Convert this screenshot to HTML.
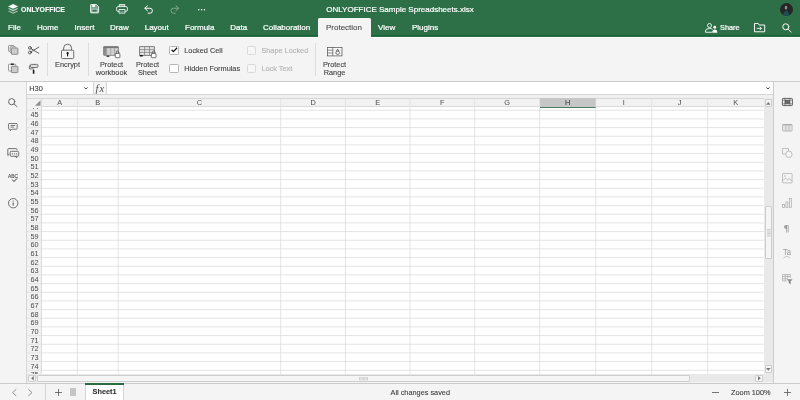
<!DOCTYPE html>
<html lang="en"><head><meta charset="utf-8"><title>ONLYOFFICE Sample Spreadsheets.xlsx</title>
<style>
*{box-sizing:border-box;margin:0;padding:0}
html,body{width:800px;height:400px;overflow:hidden;background:#f4f4f4;}
body{position:relative;font-family:"Liberation Sans",sans-serif;font-size:7.33px;color:#404040;line-height:1}
.abs{position:absolute}
#hdr{position:absolute;left:0;top:0;width:800px;height:36.5px;background:#2d7048}
.tab{position:absolute;top:23.2px;font-size:8px;color:#fff;white-space:nowrap;line-height:9px;-webkit-text-stroke:0.22px}
.t{position:absolute;white-space:nowrap;line-height:7.33px}
.c{text-align:center}
svg{position:absolute;overflow:visible}
#app{position:absolute;left:0;top:0;width:800px;height:400px;will-change:transform;-webkit-text-stroke:0.1px}
.sep{position:absolute;top:42.5px;height:33px;width:0.67px;background:#dcdcdc}
.cb{position:absolute;width:9.33px;height:9.33px;border:0.67px solid #b5b5b5;border-radius:1.3px;background:#fff}
.cb.dis{border-color:#dadada;background:#f6f6f6}
.rh{position:absolute;left:27px;width:15px;text-align:center;font-size:7.33px;line-height:8.67px;color:#4a4a4a;-webkit-text-stroke:0}
.ch{position:absolute;top:99px;height:8.5px;text-align:center;font-size:7.33px;line-height:8.8px;color:#4a4a4a;-webkit-text-stroke:0}
</style></head>
<body>
<div id="app">
<div id="hdr"></div>
<div class="abs" style="left:0;top:34.9px;width:318px;height:1.6px;background:#15653a"></div>
<div class="abs" style="left:370.6px;top:34.9px;width:429.4px;height:1.6px;background:#15653a"></div>
<div class="abs" style="left:0;top:36.9px;width:318px;height:1.1px;background:#fdfdfd"></div>
<div class="abs" style="left:370.6px;top:36.9px;width:429.4px;height:1.1px;background:#fdfdfd"></div>
<svg style="left:7.9px;top:4.2px" width="10.2" height="9.8" viewBox="0 0 20.4 19.6">
<path d="M10.2 0 L20.4 4.8 L10.2 9.6 L0 4.8 Z" fill="#fff"/>
<path d="M2.6 8.4 L0 9.7 L10.2 14.5 L20.4 9.7 L17.8 8.4 L10.2 12 Z" fill="#fff" opacity=".8"/>
<path d="M2.6 13.4 L0 14.7 L10.2 19.5 L20.4 14.7 L17.8 13.4 L10.2 17 Z" fill="#fff" opacity=".6"/>
</svg>
<div class="t" style="left:20.5px;top:5.7px;font-size:7.7px;line-height:7.7px;font-weight:bold;color:#fff;transform-origin:0 0;transform:scaleX(.9)">ONLYOFFICE</div>
<svg style="left:90px;top:4.2px" width="9.2" height="9.4" viewBox="0 0 9.2 9.4" fill="none" stroke="#fff" stroke-width=".85" stroke-linejoin="round">
<path d="M.6 1.1 Q.6 .5 1.2 .5 H6.4 L8.6 2.7 V8.3 Q8.6 8.9 8 8.9 H1.2 Q.6 8.9 .6 8.3 Z" fill="rgba(255,255,255,.38)"/>
<rect x="2.3" y=".9" width="2.6" height="2.1" fill="#fff" stroke="none"/>
<rect x="2" y="5.3" width="5.2" height="2.7" fill="#2d7048" stroke="#e9f1ec" stroke-width=".6"/>
</svg>
<svg style="left:115.6px;top:4.2px" width="12" height="9.6" viewBox="0 0 12 9.6" fill="none" stroke="#fff" stroke-width=".85" stroke-linejoin="round">
<path d="M3.3 2.6 V.6 H8.7 V2.6" fill="rgba(255,255,255,.38)"/>
<rect x=".6" y="2.6" width="10.8" height="4.8" rx="1.5"/>
<rect x="3" y="5.5" width="6" height="3.6" fill="#2d7048"/>
<path d="M4.3 7.3 H7.7" stroke-width=".7" stroke="rgba(255,255,255,.55)"/>
</svg>
<svg style="left:143.7px;top:4.5px" width="9.4" height="9" viewBox="0 0 19 18" fill="none" stroke="#fff" stroke-width="2" stroke-linecap="round" stroke-linejoin="round">
<path d="M7 1.5 L1.5 6.5 L7 11.5"/><path d="M2 6.5 H12 A5 5 0 0 1 12 16.5 H8.5"/>
</svg>
<svg style="left:169.7px;top:4.5px;opacity:.4" width="9.4" height="9" viewBox="0 0 19 18" fill="none" stroke="#fff" stroke-width="2" stroke-linecap="round" stroke-linejoin="round">
<path d="M12 1.5 L17.5 6.5 L12 11.5"/><path d="M17 6.5 H7 A5 5 0 0 0 7 16.5 H10.5"/>
</svg>
<svg style="left:198px;top:8.6px" width="7.2" height="1.6" viewBox="0 0 7.2 1.6"><circle cx=".8" cy=".8" r=".75" fill="#fff"/><circle cx="3.6" cy=".8" r=".75" fill="#fff"/><circle cx="6.4" cy=".8" r=".75" fill="#fff"/></svg>
<div class="t" style="left:200px;width:400px;text-align:center;top:4.7px;font-size:8px;line-height:9px;color:#fff;-webkit-text-stroke:.2px">ONLYOFFICE Sample Spreadsheets.xlsx</div>
<svg style="left:780px;top:2.5px" width="13" height="13" viewBox="0 0 13 13">
<defs><clipPath id="av"><circle cx="6.5" cy="6.5" r="6.5"/></clipPath></defs>
<circle cx="6.5" cy="6.5" r="6.5" fill="#262626"/>
<g clip-path="url(#av)"><ellipse cx="6" cy="4.7" rx="1.3" ry="1.9" fill="#8a8f93"/><path d="M3.3 13 Q3.5 8 6.2 8 Q9 8 9.2 13Z" fill="#1f4f55"/></g>
</svg>
<div class="abs" style="left:318px;top:18.4px;width:52.6px;height:18.6px;background:#f4f4f4;border-radius:1.5px 1.5px 0 0"></div>
<div class="tab" style="left:8px">File</div>
<div class="tab" style="left:37px">Home</div>
<div class="tab" style="left:74.5px">Insert</div>
<div class="tab" style="left:110px">Draw</div>
<div class="tab" style="left:144.7px">Layout</div>
<div class="tab" style="left:185px">Formula</div>
<div class="tab" style="left:230.2px">Data</div>
<div class="tab" style="left:263.1px">Collaboration</div>
<div class="tab" style="left:378.1px">View</div>
<div class="tab" style="left:411.9px">Plugins</div>
<div class="tab" style="left:326px;color:#444;-webkit-text-stroke:0.07px">Protection</div>
<svg style="left:705.2px;top:23px" width="13" height="9.8" viewBox="0 0 26 19.6" fill="none" stroke="#fff" stroke-width="1.8">
<circle cx="9" cy="5" r="4"/><path d="M1 18.5 V16 Q1 11 9 11 Q13 11 15 12.5 M1 18.5 H14" />
<circle cx="19.5" cy="8.5" r="2.8" fill="#fff" stroke="none"/><path d="M14.5 19.6 Q14.5 13 19.5 13 Q24.5 13 24.5 19.6Z" fill="#fff" stroke="none"/>
</svg>
<div class="t" style="left:720px;top:24px;color:#fff;line-height:8px;-webkit-text-stroke:.2px">Share</div>
<svg style="left:754.4px;top:23.2px" width="11.2" height="9.3" viewBox="0 0 22.4 18.6" fill="none" stroke="#fff" stroke-width="1.9" stroke-linejoin="round">
<path d="M1 1 H8.5 L10.5 4 H21.4 V17.6 H1 Z"/><path d="M5.5 10.8 H14.5 M11.5 7.3 L15 10.8 L11.5 14.3" stroke-width="1.7"/>
</svg>
<svg style="left:781.8px;top:23px" width="9.6" height="9.6" viewBox="0 0 19 19" fill="none" stroke="#fff" stroke-width="1.9" stroke-linecap="round">
<circle cx="7.5" cy="7.5" r="6"/><path d="M12 12 L18 18"/>
</svg>
<svg style="left:8px;top:45.4px" width="10.4" height="9.8" viewBox="0 0 10.4 9.8" fill="none" stroke="#7d7d7d" stroke-width=".75">
<path d="M1.9 6.4 H1.2 Q.5 6.4 .5 5.7 V1.2 Q.5 .5 1.2 .5 H5.6 Q6.3 .5 6.3 1.2"/>
<path d="M3.4 7.6 H2.8 Q2.1 7.6 2.1 6.9 V2.5 Q2.1 1.8 2.8 1.8 H7.2 Q7.9 1.8 7.9 2.5"/>
<rect x="3.4" y="3" width="6.5" height="6.3" rx=".6" fill="#d4d4d4" stroke="#6a6a6a"/>
<path d="M5.1 3.4 V9 M6.65 3.4 V9 M8.2 3.4 V9" stroke="#bdbdbd" stroke-width=".5"/>
</svg>
<svg style="left:28px;top:45.8px" width="11.2" height="8.4" viewBox="0 0 11.2 8.4" fill="none" stroke="#3a3a3a" stroke-width=".8" stroke-linecap="round">
<ellipse cx="1.9" cy="1.9" rx="1.4" ry="1.4"/><ellipse cx="1.9" cy="6.5" rx="1.4" ry="1.4"/><path d="M3.1 2.7 L10.8 7.3 M3.1 5.7 L10.8 1.1"/>
</svg>
<svg style="left:8px;top:63.4px" width="10.4" height="10" viewBox="0 0 10.4 10" fill="none" stroke="#7d7d7d" stroke-width=".75">
<path d="M3.2 8 H1.3 Q.5 8 .5 7.2 V2 Q.5 1.2 1.3 1.2 H7 Q7.8 1.2 7.8 2 V3"/>
<rect x="2.7" y=".4" width="3.2" height="1.5" rx=".4" fill="#2a2a2a" stroke="none"/>
<rect x="3.4" y="3.3" width="6.5" height="6.3" rx=".6" fill="#d4d4d4" stroke="#6a6a6a"/>
<path d="M5.1 3.7 V9.3 M6.65 3.7 V9.3 M8.2 3.7 V9.3" stroke="#bdbdbd" stroke-width=".5"/>
</svg>
<svg style="left:28.6px;top:63.6px" width="9.4" height="9.8" viewBox="0 0 9.4 9.8" fill="none" stroke="#4a4a4a" stroke-width=".75">
<rect x="1.3" y=".4" width="7.7" height="3.1" rx="1.2" fill="#dedede"/>
<path d="M1.3 1.9 H.4 V4.9 H4.6 V6"/>
<rect x="3.8" y="5.9" width="1.6" height="3.8" rx=".3" fill="#1c1c1c" stroke="none"/>
</svg>
<div class="sep" style="left:46.6px"></div>
<div class="sep" style="left:87.6px"></div>
<div class="sep" style="left:315.2px"></div>
<svg style="left:61px;top:44px" width="13.2" height="15.2" viewBox="0 0 13.2 15.2" fill="none" stroke="#505050" stroke-width=".85">
<path d="M2.6 6.2 V4.2 A4 4 0 0 1 10.6 4.2 V6.2"/><rect x=".5" y="6.2" width="12.2" height="8.4" rx="1" fill="#fafafa"/>
<path d="M3 6.8 V14 M4.8 6.8 V14 M8.4 6.8 V14 M10.2 6.8 V14" stroke="#e3e3e3" stroke-width=".5"/>
<circle cx="6.6" cy="9.2" r="1.1" fill="#111" stroke="none"/><rect x="6.05" y="9.2" width="1.1" height="3.2" fill="#111" stroke="none"/>
</svg>
<div class="t c" style="left:47px;width:41px;top:61.2px">Encrypt</div>
<svg style="left:103px;top:45.5px" width="18" height="13" viewBox="0 0 18 13" fill="none">
<rect x=".5" y=".6" width="15" height="8.8" rx="1.2" fill="#cfcfcf" stroke="#6e6e6e" stroke-width=".7"/>
<rect x=".5" y=".6" width="3.2" height="8.8" fill="#8c8c8c"/>
<rect x=".5" y=".5" width="15" height="1.6" fill="#777"/>
<path d="M7.7 2 V9.2 M11.6 2 V9.2" stroke="#9a9a9a" stroke-width=".7"/>
<rect x="3.6" y="9.6" width="2.7" height="1.2" fill="#1a1a1a"/>
<rect x="12.3" y="7.4" width="4.6" height="4.3" rx=".5" fill="#fff" stroke="#555" stroke-width=".8"/>
<path d="M13.3 7.4 V6.3 A1.3 1.3 0 0 1 15.9 6.3 V7.4" stroke="#555" stroke-width=".8"/>
</svg>
<div class="t c" style="left:88px;width:47px;top:61.2px">Protect<br>workbook</div>
<svg style="left:139px;top:45.5px" width="18" height="13" viewBox="0 0 18 13" fill="none">
<rect x=".7" y=".7" width="14.6" height="8.6" fill="#e6e6e6" stroke="#5a5a5a" stroke-width=".75"/>
<path d="M.7 3.6 H15.3 M.7 6.4 H15.3 M5.6 .7 V9.3 M10.5 .7 V9.3" stroke="#777" stroke-width=".7"/>
<rect x=".8" y="9" width="3" height="1.5" fill="#1a1a1a"/>
<rect x="12.4" y="7.4" width="4.6" height="4.3" rx=".5" fill="#fff" stroke="#555" stroke-width=".8"/>
<path d="M13.4 7.4 V6.3 A1.3 1.3 0 0 1 16 6.3 V7.4" stroke="#555" stroke-width=".8"/>
</svg>
<div class="t c" style="left:127px;width:41px;top:61.2px">Protect<br>Sheet</div>
<div class="cb" style="left:169.2px;top:45.5px"></div>
<svg style="left:170.7px;top:47.2px" width="6.6" height="5.6" viewBox="0 0 13 11" fill="none" stroke="#111" stroke-width="2.4"><path d="M1.2 5.5 L4.8 9 L12 1.4"/></svg>
<div class="cb" style="left:169.2px;top:64px"></div>
<div class="cb dis" style="left:246.5px;top:45.5px"></div>
<div class="cb dis" style="left:246.5px;top:64px"></div>
<div class="t" style="left:184.3px;top:47.2px">Locked Cell</div>
<div class="t" style="left:184.3px;top:65px">Hidden Formulas</div>
<div class="t" style="left:261.4px;top:47.2px;color:#b0b0b0">Shape Locked</div>
<div class="t" style="left:261.4px;top:65px;color:#b0b0b0">Lock Text</div>
<svg style="left:327px;top:47px" width="15.4" height="9.4" viewBox="0 0 15.4 9.4" fill="none">
<rect x=".4" y=".4" width="14.6" height="8.5" fill="#fbfbfb" stroke="#555" stroke-width=".75"/>
<path d="M.4 3.2 H5.8 M.4 6 H5.8 M5.8 .4 V8.9" stroke="#555" stroke-width=".7"/>
<path d="M5.8 3.2 H15 M5.8 6 H15 M10.4 .4 V8.9" stroke="#b5b5b5" stroke-width=".6" stroke-dasharray=".9 .9"/>
<rect x="9" y="4.2" width="3.4" height="3.1" rx="1.1" fill="#fff" stroke="#3a3a3a" stroke-width=".7"/>
<path d="M9.8 4.2 V3.5 A.9 .9 0 0 1 11.6 3.5 V4.2" stroke="#3a3a3a" stroke-width=".7"/>
</svg>
<div class="t c" style="left:316px;width:37px;top:61.2px">Protect<br>Range</div>
<div class="abs" style="left:0;top:81.3px;width:26.5px;height:301.4px;background:#f4f4f4;border-right:0.67px solid #d6d6d6"></div>
<div class="abs" style="left:773.3px;top:81.3px;width:26.7px;height:301.4px;background:#f4f4f4;border-left:0.67px solid #cbcbcb"></div>
<div class="abs" style="left:26.8px;top:81.4px;width:746.5px;height:13.6px;background:#fff;border-bottom:0.67px solid #d6d6d6"></div>
<div class="abs" style="left:92.5px;top:81.4px;width:14.6px;height:13.6px;background:#f4f4f4;border-left:0.67px solid #d6d6d6;border-right:0.67px solid #d6d6d6;border-bottom:0.67px solid #d6d6d6"></div>
<div class="t" style="left:29.3px;top:84.6px">H30</div>
<div class="t" style="left:95.6px;top:82.8px;font-family:'Liberation Serif',serif;font-style:italic;font-size:10.5px;line-height:11px;color:#505050;letter-spacing:.9px;-webkit-text-stroke:0">fx</div>
<svg style="left:84.1px;top:87.4px" width="3.8" height="2.5" viewBox="0 0 7.6 5" fill="none" stroke="#3c3c3c" stroke-width="2"><path d="M.6 .8 L3.8 4 L7 .8"/></svg>
<svg style="left:766px;top:87.4px" width="3.8" height="2.5" viewBox="0 0 7.6 5" fill="none" stroke="#3c3c3c" stroke-width="2"><path d="M.6 .8 L3.8 4 L7 .8"/></svg>
<div class="abs" style="left:26.8px;top:95.2px;width:746.5px;height:3.2px;background:#f0f0f0"></div>
<div class="abs" style="left:26.8px;top:98.3px;width:746.5px;height:275.8px;background:#fff"></div>
<div class="abs" style="left:26.8px;top:98.3px;width:737px;height:8.9px;background:#f2f2f2;border-top:0.67px solid #d6d6d6;border-bottom:0.67px solid #dadada"></div>
<div class="abs" style="left:26.8px;top:98.3px;width:15.2px;height:275.8px;background:#f2f2f2;border-right:0.67px solid #dadada;border-top:0.67px solid #d6d6d6"></div>
<div class="abs" style="left:539.6px;top:98.3px;width:56.2px;height:9.3px;background:#c6c6c6;border-bottom:1.8px solid #4f7a5c"></div>
<svg style="left:0;top:0" width="800" height="400" viewBox="0 0 800 400"><g stroke="#d6d6d6" stroke-width="0.67"><path d="M77.4 107.2 V374"/><path d="M118.25 107.2 V374"/><path d="M280.7 107.2 V374"/><path d="M345.4 107.2 V374"/><path d="M410 107.2 V374"/><path d="M474.7 107.2 V374"/><path d="M539.6 107.2 V374"/><path d="M595.75 107.2 V374"/><path d="M651.75 107.2 V374"/><path d="M707.6 107.2 V374"/><path d="M42 110.25 H763.7"/><path d="M42 118.92 H763.7"/><path d="M42 127.58 H763.7"/><path d="M42 136.25 H763.7"/><path d="M42 144.92 H763.7"/><path d="M42 153.58 H763.7"/><path d="M42 162.25 H763.7"/><path d="M42 170.92 H763.7"/><path d="M42 179.58 H763.7"/><path d="M42 188.25 H763.7"/><path d="M42 196.92 H763.7"/><path d="M42 205.58 H763.7"/><path d="M42 214.25 H763.7"/><path d="M42 222.92 H763.7"/><path d="M42 231.58 H763.7"/><path d="M42 240.25 H763.7"/><path d="M42 248.92 H763.7"/><path d="M42 257.58 H763.7"/><path d="M42 266.25 H763.7"/><path d="M42 274.92 H763.7"/><path d="M42 283.58 H763.7"/><path d="M42 292.25 H763.7"/><path d="M42 300.92 H763.7"/><path d="M42 309.58 H763.7"/><path d="M42 318.25 H763.7"/><path d="M42 326.92 H763.7"/><path d="M42 335.58 H763.7"/><path d="M42 344.25 H763.7"/><path d="M42 352.92 H763.7"/><path d="M42 361.58 H763.7"/><path d="M42 370.25 H763.7"/></g><g stroke="#dcdcdc" stroke-width="0.67"><path d="M77.4 98.6 V107"/><path d="M118.25 98.6 V107"/><path d="M280.7 98.6 V107"/><path d="M345.4 98.6 V107"/><path d="M410 98.6 V107"/><path d="M474.7 98.6 V107"/><path d="M539.6 98.6 V107"/><path d="M595.75 98.6 V107"/><path d="M651.75 98.6 V107"/><path d="M707.6 98.6 V107"/><path d="M27 110.25 H42"/><path d="M27 118.92 H42"/><path d="M27 127.58 H42"/><path d="M27 136.25 H42"/><path d="M27 144.92 H42"/><path d="M27 153.58 H42"/><path d="M27 162.25 H42"/><path d="M27 170.92 H42"/><path d="M27 179.58 H42"/><path d="M27 188.25 H42"/><path d="M27 196.92 H42"/><path d="M27 205.58 H42"/><path d="M27 214.25 H42"/><path d="M27 222.92 H42"/><path d="M27 231.58 H42"/><path d="M27 240.25 H42"/><path d="M27 248.92 H42"/><path d="M27 257.58 H42"/><path d="M27 266.25 H42"/><path d="M27 274.92 H42"/><path d="M27 283.58 H42"/><path d="M27 292.25 H42"/><path d="M27 300.92 H42"/><path d="M27 309.58 H42"/><path d="M27 318.25 H42"/><path d="M27 326.92 H42"/><path d="M27 335.58 H42"/><path d="M27 344.25 H42"/><path d="M27 352.92 H42"/><path d="M27 361.58 H42"/><path d="M27 370.25 H42"/></g><path d="M40.5 100.3 V105.8 H35 Z" fill="#8f8f8f"/></svg>
<div class="ch" style="left:42px;width:35.40px">A</div>
<div class="ch" style="left:77.4px;width:40.85px">B</div>
<div class="ch" style="left:118.25px;width:162.45px">C</div>
<div class="ch" style="left:280.7px;width:64.70px">D</div>
<div class="ch" style="left:345.4px;width:64.60px">E</div>
<div class="ch" style="left:410px;width:64.70px">F</div>
<div class="ch" style="left:474.7px;width:64.90px">G</div>
<div class="ch" style="left:539.6px;width:56.15px;color:#2e2e2e">H</div>
<div class="ch" style="left:595.75px;width:56.00px">I</div>
<div class="ch" style="left:651.75px;width:55.85px">J</div>
<div class="ch" style="left:707.6px;width:56.15px">K</div>
<div class="abs" style="left:27px;top:107.6px;width:15px;height:2.5px;overflow:hidden"><div class="rh" style="left:0;top:-5.02px">44</div></div>
<div class="rh" style="top:111.45px">45</div>
<div class="rh" style="top:120.12px">46</div>
<div class="rh" style="top:128.78px">47</div>
<div class="rh" style="top:137.45px">48</div>
<div class="rh" style="top:146.12px">49</div>
<div class="rh" style="top:154.78px">50</div>
<div class="rh" style="top:163.45px">51</div>
<div class="rh" style="top:172.12px">52</div>
<div class="rh" style="top:180.78px">53</div>
<div class="rh" style="top:189.45px">54</div>
<div class="rh" style="top:198.12px">55</div>
<div class="rh" style="top:206.78px">56</div>
<div class="rh" style="top:215.45px">57</div>
<div class="rh" style="top:224.12px">58</div>
<div class="rh" style="top:232.78px">59</div>
<div class="rh" style="top:241.45px">60</div>
<div class="rh" style="top:250.12px">61</div>
<div class="rh" style="top:258.78px">62</div>
<div class="rh" style="top:267.45px">63</div>
<div class="rh" style="top:276.12px">64</div>
<div class="rh" style="top:284.78px">65</div>
<div class="rh" style="top:293.45px">66</div>
<div class="rh" style="top:302.12px">67</div>
<div class="rh" style="top:310.78px">68</div>
<div class="rh" style="top:319.45px">69</div>
<div class="rh" style="top:328.12px">70</div>
<div class="rh" style="top:336.78px">71</div>
<div class="rh" style="top:345.45px">72</div>
<div class="rh" style="top:354.12px">73</div>
<div class="rh" style="top:362.78px">74</div>
<div class="abs" style="left:27px;top:370.55px;width:15px;height:3.45px;overflow:hidden"><div class="rh" style="left:0;top:0.9px">75</div></div>
<div class="abs" style="left:763.9px;top:98.3px;width:9.4px;height:284.2px;background:#e9e9e9"></div>
<div class="abs" style="left:764.5px;top:99.4px;width:7.8px;height:7.9px;background:#f5f5f5;border:0.67px solid #cdcdcd;border-radius:1px"></div>
<div class="abs" style="left:764.5px;top:365px;width:7.8px;height:7.9px;background:#f5f5f5;border:0.67px solid #cdcdcd;border-radius:1px"></div>
<div class="abs" style="left:764.5px;top:206.3px;width:7.8px;height:52.4px;background:#f5f5f5;border:0.67px solid #cdcdcd;border-radius:1px"></div>
<svg style="left:766.1px;top:102px" width="4.6" height="2.8" viewBox="0 0 4.6 2.8"><path d="M0 2.8 L2.3 0 L4.6 2.8Z" fill="#777"/></svg>
<svg style="left:766.1px;top:367.6px" width="4.6" height="2.8" viewBox="0 0 4.6 2.8"><path d="M0 0 L2.3 2.8 L4.6 0Z" fill="#777"/></svg>
<svg style="left:766.5px;top:229px" width="3.8" height="8.4" viewBox="0 0 3.8 8.4" stroke="#c0c0c0" stroke-width=".67"><path d="M0 .5H3.8M0 1.83H3.8M0 3.17H3.8M0 4.5H3.8M0 5.83H3.8M0 7.17H3.8"/></svg>
<div class="abs" style="left:26.8px;top:374.1px;width:737.2px;height:8.4px;background:#e9e9e9"></div>
<div class="abs" style="left:27.6px;top:374.6px;width:8.9px;height:7.3px;background:#f5f5f5;border:0.67px solid #cdcdcd;border-radius:1px"></div>
<div class="abs" style="left:754.8px;top:374.6px;width:8.4px;height:7.3px;background:#f5f5f5;border:0.67px solid #cdcdcd;border-radius:1px"></div>
<div class="abs" style="left:37.2px;top:374.6px;width:653.2px;height:7.3px;background:#f5f5f5;border:0.67px solid #cdcdcd;border-radius:1px"></div>
<svg style="left:30.6px;top:376px" width="2.8" height="4.6" viewBox="0 0 2.8 4.6"><path d="M2.8 0 L0 2.3 L2.8 4.6Z" fill="#777"/></svg>
<svg style="left:757.8px;top:376px" width="2.8" height="4.6" viewBox="0 0 2.8 4.6"><path d="M0 0 L2.8 2.3 L0 4.6Z" fill="#777"/></svg>
<svg style="left:359.2px;top:376.7px" width="8.8" height="3.4" viewBox="0 0 8.8 3.4" stroke="#c0c0c0" stroke-width=".67"><path d="M.5 0V3.4M1.83 0V3.4M3.17 0V3.4M4.5 0V3.4M5.83 0V3.4M7.17 0V3.4M8.5 0V3.4"/></svg>
<div class="abs" style="left:0;top:80.5px;width:800px;height:0.9px;background:#cdcdcd"></div>
<div class="abs" style="left:0;top:382.6px;width:800px;height:17.4px;background:#f4f4f4;border-top:0.67px solid #cbcbcb"></div>
<svg style="left:12.2px;top:388.5px" width="4.6" height="7.2" viewBox="0 0 4.6 7.2" fill="none" stroke="#858585" stroke-width=".9"><path d="M4.2 .3 L.6 3.6 L4.2 6.9"/></svg>
<svg style="left:27.8px;top:388.5px" width="4.6" height="7.2" viewBox="0 0 4.6 7.2" fill="none" stroke="#858585" stroke-width=".9"><path d="M.4 .3 L4 3.6 L.4 6.9"/></svg>
<div class="abs" style="left:45.4px;top:383px;width:0.67px;height:17px;background:#d4d4d4"></div>
<svg style="left:55px;top:388.8px" width="7" height="7" viewBox="0 0 7 7" stroke="#555" stroke-width=".8"><path d="M3.5 0V7M0 3.5H7"/></svg>
<div class="abs" style="left:69.8px;top:388.2px;width:6.7px;height:7.4px;background:#c6c6c6"></div>
<div class="abs" style="left:85.4px;top:383.4px;width:38.4px;height:16.6px;background:#fff;border-left:0.67px solid #d4d4d4;border-right:0.67px solid #d4d4d4"></div>
<div class="abs" style="left:85.4px;top:383.4px;width:38.4px;height:2.1px;background:#2a6a41"></div>
<div class="t c" style="left:85.4px;width:38.4px;top:387.8px;font-weight:bold;color:#333">Sheet1</div>
<div class="t" style="left:390.5px;top:389.2px">All changes saved</div>
<svg style="left:712px;top:392px" width="7" height="1" viewBox="0 0 7 1"><rect width="7" height=".8" fill="#555"/></svg>
<div class="t" style="left:731px;top:389.2px">Zoom 100%</div>
<svg style="left:783.5px;top:388.8px" width="7" height="7" viewBox="0 0 7 7" stroke="#555" stroke-width=".8"><path d="M3.5 0V7M0 3.5H7"/></svg>
<svg style="left:8px;top:97.6px" width="9.4" height="9" viewBox="0 0 9.4 9" fill="none" stroke="#4f4f4f" stroke-width=".85" stroke-linecap="round"><circle cx="3.7" cy="3.7" r="3.1"/><path d="M6 6 L9 8.6"/></svg>
<svg style="left:8.1px;top:123.1px" width="9.7" height="8.4" viewBox="0 0 19.4 16.8" fill="none" stroke="#4f4f4f" stroke-width="1.5" stroke-linejoin="round"><path d="M1 2.5 Q1 1 2.5 1 H16.9 Q18.4 1 18.4 2.5 V11 Q18.4 12.5 16.9 12.5 H7.5 L4.5 15.8 V12.5 H2.5 Q1 12.5 1 11 Z"/><path d="M5 5 H14.5 M5 8.3 H12"/></svg>
<svg style="left:7px;top:148px" width="12" height="10" viewBox="0 0 12 10" fill="none" stroke="#4f4f4f" stroke-width=".8" stroke-linejoin="round"><path d="M9.9 2.2 V1.6 Q9.9 .6 8.9 .6 H1.8 Q.8 .6 .8 1.6 V7.4 L2.3 6.2"/><rect x="3.2" y="3.3" width="8.5" height="5" rx="1"/><path d="M9.7 8.3 V9.6 L8.2 8.3"/><path d="M4.8 5.9 H6 M6.9 5.9 H8.1 M9 5.9 H10.2" stroke="#777" stroke-width="1.3"/></svg>
<div class="t" style="left:8.1px;top:174.3px;font-size:4.9px;line-height:5px;color:#555;-webkit-text-stroke:.15px">ABC</div>
<svg style="left:12.3px;top:177.8px" width="5.4" height="4.2" viewBox="0 0 5.4 4.2" fill="none" stroke="#333" stroke-width="1"><path d="M.3 1.7 L2 3.5 L5.1 .4"/></svg>
<svg style="left:8.1px;top:197.7px" width="10.4" height="10.4" viewBox="0 0 10.4 10.4" fill="none" stroke="#4f4f4f" stroke-width=".8"><circle cx="5.2" cy="5.2" r="4.7"/><path d="M5.2 4.5 V7.6" stroke-width="1"/><circle cx="5.2" cy="3" r=".6" fill="#4f4f4f" stroke="none"/></svg>
<svg style="left:781.8px;top:98px" width="10.8" height="8" viewBox="0 0 10.8 8" fill="none"><rect x=".4" y=".4" width="10" height="7.2" rx=".8" fill="#f0f0f0" stroke="#3f3f3f" stroke-width=".8"/><rect x="2.9" y="2.1" width="5" height="3.8" fill="#5a5a5a"/><path d="M.4 2.1 H10.4 M.4 5.9 H10.4 M2.9 .4 V7.6 M7.9 .4 V7.6" stroke="#4a4a4a" stroke-width=".55"/><path d="M4.6 2.1 V5.9 M6.2 2.1 V5.9" stroke="#999" stroke-width=".4"/></svg>
<svg style="left:782px;top:124.2px" width="10.6" height="7.6" viewBox="0 0 21.2 15.2" fill="none" stroke="#a8a8a8" stroke-width="1.4"><rect x="1" y="1" width="19.2" height="13.2" rx="1.2" fill="#e4e4e4"/><path d="M7.4 1 V14.2 M13.8 1 V14.2"/><path d="M1 1.6 H20.2" stroke-width="2"/></svg>
<svg style="left:782px;top:147.5px" width="10.6" height="10" viewBox="0 0 21.2 20" fill="none" stroke="#a8a8a8" stroke-width="1.4"><path d="M7 12 H1 V1 H13 V6"/><circle cx="13.8" cy="12.6" r="6.4"/></svg>
<svg style="left:782px;top:172.6px" width="10.6" height="10.4" viewBox="0 0 21.2 20.8" fill="none" stroke="#a8a8a8" stroke-width="1.4" stroke-linejoin="round"><rect x="1" y="1" width="19.2" height="18.8" rx="1.2"/><path d="M1 16 L7 10 L11 14 L14.5 11 L20.2 16"/><circle cx="6" cy="6" r="1.4" fill="#a8a8a8" stroke="none"/></svg>
<svg style="left:782.4px;top:198px" width="9.8" height="10" viewBox="0 0 19.6 20" fill="none" stroke="#a8a8a8" stroke-width="1.4"><rect x="1" y="13" width="4" height="6"/><rect x="7.8" y="8" width="4" height="11"/><rect x="14.6" y="1" width="4" height="18"/></svg>
<div class="t c" style="left:779.6px;width:14px;top:222.6px;font-family:'DejaVu Sans',sans-serif;font-size:9.5px;line-height:11px;color:#9a9a9a">¶</div>
<div class="t c" style="left:779.9px;width:14px;top:246.6px;font-size:9.6px;line-height:10px;color:#a0a0a0;transform:scaleX(.8)">Ta</div>
<svg style="left:783.2px;top:256.4px" width="7.6" height="2.6" viewBox="0 0 17.2 6" fill="none" stroke="#a8a8a8" stroke-width="1.4"><path d="M1 5 Q8.6 -3 16.2 5"/></svg>
<svg style="left:782px;top:274px" width="10.6" height="10.4" viewBox="0 0 21.2 20.8" fill="none" stroke="#a8a8a8" stroke-width="1.4"><path d="M9 14 H1 V1 H17 V8"/><path d="M1 5 H17 M1 9.5 H11 M6.5 1 V14 M11.5 1 V9"/><path d="M10.5 11 H20.2 L16.8 15 V19.8 L14 18 V15 Z" fill="#8a8a8a" stroke="#8a8a8a" stroke-width="1"/></svg>
</div>
</body></html>
